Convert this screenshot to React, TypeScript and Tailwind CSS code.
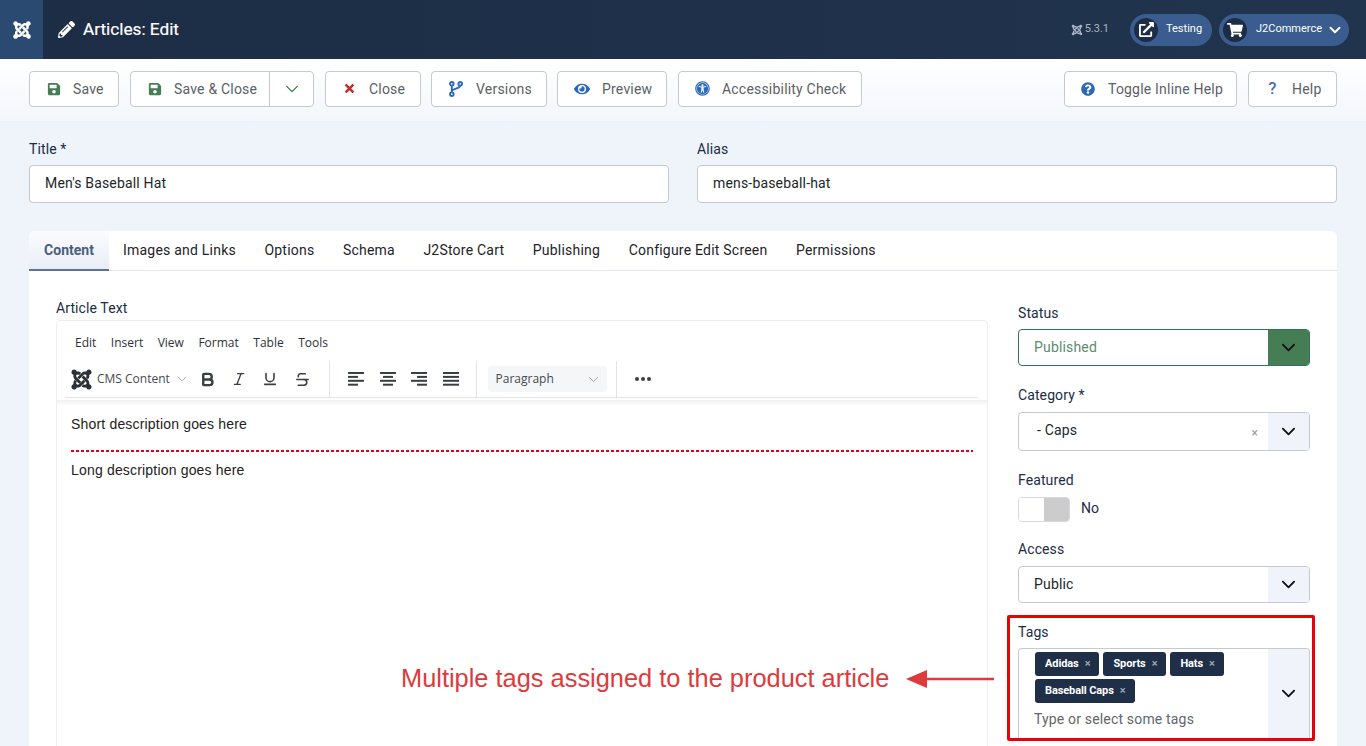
import React from 'react';
import {
  FaJoomla,
  FaPencilAlt,
  FaSave,
  FaTimes,
  FaEye,
  FaUniversalAccess,
  FaQuestionCircle,
  FaExternalLinkAlt,
  FaShoppingCart,
} from 'react-icons/fa';
import { Bold, Italic, Underline, Strikethrough } from 'lucide-react';

const Chevron = ({ className = '', size = 16, stroke = 2 }: { className?: string; size?: number; stroke?: number }) => (
  <svg width={size} height={size} viewBox="0 0 16 16" fill="none" className={className}>
    <path d="M2 5l6 6 6-6" stroke="currentColor" strokeWidth={stroke} strokeLinecap="round" strokeLinejoin="round" />
  </svg>
);

const BranchIcon = ({ className = '' }: { className?: string }) => (
  <svg width="14" height="16" viewBox="0 0 14 16" fill="none" stroke="currentColor" strokeWidth="1.9" className={className}>
    <circle cx="2.8" cy="2.8" r="1.8" />
    <circle cx="11.2" cy="2.8" r="1.8" />
    <circle cx="2.8" cy="13.2" r="1.8" />
    <path d="M2.8 4.6v6.8M11.2 4.6c0 3.6-8.4 2.4-8.4 6" />
  </svg>
);

const ToolBtn = ({ icon, label, w, pad, gap }: { icon: React.ReactNode; label: string; w: string; pad: string; gap: string }) => (
  <button className={`${w} ${pad} ${gap} h-[36px] flex items-center bg-white border border-[#c4c9d2] rounded-[4px] text-[14px] text-[#5a5f66] tracking-[0.2px]`}>
    {icon}
    <span className="pt-[1px]">{label}</span>
  </button>
);

const Label = ({ children, className = '' }: { children: React.ReactNode; className?: string }) => (
  <div className={`text-[14px] leading-[16px] tracking-[0.1px] text-[#1c2c45] ${className}`}>{children}</div>
);

const TextField = ({ label, value }: { label: string; value: string }) => (
  <div className="flex-1">
    <Label className="mb-[8px]">{label}</Label>
    <div className="h-[38px] bg-white border border-[#c4c9d2] rounded-[4px] pl-[15px] pb-[1px] flex items-center text-[14px] tracking-[0.17px] text-[#22262a]">{value}</div>
  </div>
);

const SelectArrow = ({ className = '' }: { className?: string }) => (
  <div className={`w-[41px] flex items-center justify-center text-[#111] bg-[#f0f3fa] ${className}`}>
    <Chevron size={15} />
  </div>
);

const Tag = ({ label }: { label: string }) => (
  <span className="h-[24px] pl-[10px] pr-[9px] bg-[#1f2f48] rounded-[3px] flex items-center gap-[6px] text-[11px] tracking-[-0.1px] font-bold text-white">
    {label}
    <span className="text-[#9aa3b2] text-[11px]">×</span>
  </span>
);

const Divider = ({ className = '' }: { className?: string }) => <div className={`w-px h-[37px] bg-[#e2e3e5] ${className}`} />;

const AlignIcon = ({ lines }: { lines: number[][] }) => (
  <svg width="16" height="14" viewBox="0 0 16 14" fill="#3a3f45">
    {lines.map((l, i) => (
      <rect key={i} x={l[0]} y={i * 3.9} width={l[1]} height="2" />
    ))}
  </svg>
);

const tabs = ['Images and Links', 'Options', 'Schema', 'J2Store Cart', 'Publishing', 'Configure Edit Screen', 'Permissions'];
const menus = ['Edit', 'Insert', 'View', 'Format', 'Table', 'Tools'];

export default function App() {
  return (
    <div className="relative h-[746px] overflow-hidden bg-[#eff3fa] font-['Roboto',sans-serif]">
      {/* header */}
      <header className="h-[59px] flex items-center bg-gradient-to-r from-[#1c2d45] to-[#21344e] text-white">
        <div className="w-[43px] h-full bg-[#2a4a72] flex items-center justify-center">
          <FaJoomla size={20} />
        </div>
        <FaPencilAlt size={17} className="ml-[15px]" />
        <h1 className="ml-[8px] text-[17.2px] font-normal [-webkit-text-stroke:0.2px_white]">Articles: Edit</h1>
        <div className="ml-auto flex items-center pr-[17px]">
          <FaJoomla size={12} className="text-[#a9b4c4]" />
          <span className="ml-[2px] text-[11px] text-[#a9b4c4] mr-[21px]">5.3.1</span>
          <div className="h-[32px] w-[82px] rounded-full bg-[#3a5c8e] flex items-center mr-[7px]">
            <span className="ml-[4px] w-[24px] h-[24px] rounded-full bg-[#1c2d45] flex items-center justify-center">
              <FaExternalLinkAlt size={15} />
            </span>
            <span className="ml-[8px] text-[11px]">Testing</span>
          </div>
          <div className="h-[32px] w-[130px] rounded-full bg-[#3a5c8e] flex items-center">
            <span className="ml-[4px] w-[24px] h-[24px] rounded-full bg-[#1c2d45] flex items-center justify-center">
              <FaShoppingCart size={16} />
            </span>
            <span className="ml-[9px] text-[11px]">J2Commerce</span>
            <Chevron size={12} stroke={2.6} className="ml-[7px]" />
          </div>
        </div>
      </header>

      {/* toolbar */}
      <div className="h-[63px] px-[29px] flex items-center bg-gradient-to-b from-white to-[#f3f6fb] border-b border-[#eef1f7]">
        <div className="flex items-center gap-[11px] -mt-[3px]">
          <ToolBtn w="w-[90px]" pad="pl-[17px]" gap="gap-[12px]" icon={<FaSave size={14} className="text-[#457d54]" />} label="Save" />
          <div className="w-[184px] h-[36px] flex items-center bg-white border border-[#c4c9d2] rounded-[4px] text-[14px] text-[#5a5f66] tracking-[0.2px]">
            <div className="flex-1 flex items-center pl-[17px] gap-[12px]">
              <FaSave size={14} className="text-[#457d54]" />
              <span className="pt-[1px]">Save &amp; Close</span>
            </div>
            <div className="w-[44px] h-full border-l border-[#c4c9d2] flex items-center justify-center text-[#457d54]">
              <Chevron size={14} stroke={1.6} />
            </div>
          </div>
          <ToolBtn w="w-[96px]" pad="pl-[17px]" gap="gap-[13px]" icon={<FaTimes size={13} className="text-[#c52827]" />} label="Close" />
          <div className="-ml-px">
            <ToolBtn w="w-[116px]" pad="pl-[17px]" gap="gap-[13px]" icon={<BranchIcon className="text-[#2a69b8]" />} label="Versions" />
          </div>
          <div className="-ml-px">
            <ToolBtn w="w-[110px]" pad="pl-[16px]" gap="gap-[12px]" icon={<FaEye size={16} className="text-[#2a69b8]" />} label="Preview" />
          </div>
          <ToolBtn w="w-[184px]" pad="pl-[16px]" gap="gap-[12px]" icon={<FaUniversalAccess size={15} className="text-[#2a69b8]" />} label="Accessibility Check" />
        </div>
        <div className="ml-auto flex items-center gap-[11px] -mt-[3px]">
          <ToolBtn w="w-[173px]" pad="pl-[16px]" gap="gap-[13px]" icon={<FaQuestionCircle size={14} className="text-[#2a69b8]" />} label="Toggle Inline Help" />
          <ToolBtn
            w="w-[89px]"
            pad="pl-[19px]"
            gap="gap-[15px]"
            icon={<span className="w-[9px] text-[17px] leading-none font-medium text-[#4a6db0]">?</span>}
            label="Help"
          />
        </div>
      </div>

      {/* main */}
      <main className="px-[29px] pt-[19px]">
        <div className="flex gap-[28px]">
          <TextField label="Title *" value="Men's Baseball Hat" />
          <TextField label="Alias" value="mens-baseball-hat" />
        </div>

        <div className="mt-[28px] bg-white rounded-t-[6px] h-[600px]">
          <div className="h-[40px] flex border-b border-[#dfe3ea] text-[14px] text-[#1e2329]">
            <div className="w-[80px] h-[40px] flex items-center justify-center font-bold text-[#495d7c] bg-gradient-to-b from-[#fbfcfe] to-[#e9eef6] border-b-[2px] border-[#5d7396] rounded-tl-[6px]">
              Content
            </div>
            <div className="flex items-center pl-[14px] gap-[28.5px] h-[39px] tracking-[0.22px]">
              {tabs.map((t) => (
                <span key={t}>{t}</span>
              ))}
            </div>
          </div>

          <div className="flex pl-[27px] pr-[27px] pt-[29px]">
            {/* editor column */}
            <div className="w-[932px]">
              <Label className="mb-[4px]">Article Text</Label>
              <div className="h-[500px] border border-[#eeeeee] rounded-t-[4px]">
                <div className="h-[78px] font-['Open_Sans',sans-serif]">
                  <div className="h-[39px] pl-[18px] pt-[12px] flex gap-[14.5px] text-[12px] leading-[20px] text-[#2d3238]">
                    {menus.map((m) => (
                      <span key={m}>{m}</span>
                    ))}
                  </div>
                  <div className="h-[38px] ml-[8px] mr-[9px] pt-[1px] flex items-center border-b border-[#e2e3e5] text-[#3a3f45]">
                    <FaJoomla size={23} className="ml-[5px] text-[#2b3036]" />
                    <span className="ml-[4px] w-[74px] text-[12px] text-[#454a50] whitespace-nowrap">CMS Content</span>
                    <Chevron size={10} stroke={1.4} className="ml-[6px] text-[#9aa0a6]" />
                    <div className="ml-[5px] flex items-center">
                      <span className="w-[31px] flex justify-center"><Bold size={17} strokeWidth={3.4} /></span>
                      <span className="w-[31px] flex justify-center"><Italic size={16} strokeWidth={2} /></span>
                      <span className="w-[31px] flex justify-center"><Underline size={16} strokeWidth={2.4} /></span>
                      <span className="w-[31px] ml-[2px] flex justify-center"><Strikethrough size={17} strokeWidth={2.2} /></span>
                    </div>
                    <Divider className="ml-[11px]" />
                    <div className="ml-[18px] flex items-center gap-[15.5px]">
                      <AlignIcon lines={[[0, 16], [0, 10], [0, 16], [0, 10]]} />
                      <AlignIcon lines={[[0, 16], [3, 10], [0, 16], [3, 10]]} />
                      <AlignIcon lines={[[0, 16], [6, 10], [0, 16], [6, 10]]} />
                      <AlignIcon lines={[[0, 16], [0, 16], [0, 16], [0, 16]]} />
                    </div>
                    <Divider className="ml-[17px]" />
                    <div className="ml-[11px] w-[119px] h-[26px] bg-[#f5f6f7] rounded-[3px] flex items-center pl-[8px] pr-[8px] justify-between text-[12px] text-[#454a50]">
                      Paragraph
                      <Chevron size={11} stroke={1.4} className="text-[#9aa0a6]" />
                    </div>
                    <Divider className="ml-[9px]" />
                    <div className="ml-[18px] flex gap-[2px]">
                      <span className="w-[4px] h-[4px] rounded-full bg-[#3a3f45]" />
                      <span className="w-[4px] h-[4px] rounded-full bg-[#3a3f45]" />
                      <span className="w-[4px] h-[4px] rounded-full bg-[#3a3f45]" />
                    </div>
                  </div>
                </div>
                <div className="h-[6px] mt-[1px] bg-gradient-to-b from-[#f0f0f0] to-white" />
                <div className="px-[14px] pt-[8px] font-['Liberation_Sans',sans-serif] text-[14px] tracking-[0.18px] leading-[20px] text-[#222]">
                  <p>Short description goes here</p>
                  <div className="mt-[16px] mb-[8px] h-[2px] bg-[repeating-linear-gradient(90deg,#e0001b_0_3px,transparent_3px_5px)]" />
                  <p>Long description goes here</p>
                </div>
              </div>
            </div>

            {/* side column */}
            <div className="ml-[30px] w-[292px] pt-[5px]">
              <Label className="mb-[8px]">Status</Label>
              <div className="h-[37px] flex bg-white border border-[#37705a] rounded-[4px] overflow-hidden">
                <div className="flex-1 pl-[15px] flex items-center text-[14px] tracking-[0.17px] text-[#5f8a6c]">Published</div>
                <SelectArrow className="!bg-[#457d54]" />
              </div>

              <Label className="mt-[21px] mb-[9px]">Category *</Label>
              <div className="h-[39px] flex bg-white border border-[#c4c9d2] rounded-[4px] overflow-hidden">
                <div className="flex-1 pl-[18px] pb-[3px] flex items-center text-[14px] tracking-[0.17px] text-[#22262a]">- Caps</div>
                <span className="self-center mt-[3px] mr-[10px] text-[12px] text-[#999]">×</span>
                <SelectArrow />
              </div>

              <Label className="mt-[21px] mb-[9px]">Featured</Label>
              <div className="flex items-center">
                <div className="w-[52px] h-[25px] flex rounded-[4px] overflow-hidden border border-[#d5d8de]">
                  <div className="flex-1 bg-white" />
                  <div className="w-[25px] bg-[#cccccc]" />
                </div>
                <span className="ml-[11px] pb-[2px] text-[14px] text-[#1c2c45]">No</span>
              </div>

              <Label className="mt-[19px] mb-[9px]">Access</Label>
              <div className="h-[37px] flex bg-white border border-[#c4c9d2] rounded-[4px] overflow-hidden">
                <div className="flex-1 pl-[15px] flex items-center text-[14px] tracking-[0.17px] text-[#22262a]">Public</div>
                <SelectArrow />
              </div>

              <Label className="mt-[21px] mb-[8px]">Tags</Label>
              <div className="h-[91px] flex bg-white border border-b-0 border-[#c4c9d2] rounded-t-[4px] overflow-hidden">
                <div className="flex-1 pl-[16px] pt-[3px]">
                  <div className="flex flex-wrap gap-x-[4px] gap-y-[3px]">
                    <Tag label="Adidas" />
                    <Tag label="Sports" />
                    <Tag label="Hats" />
                    <Tag label="Baseball Caps" />
                  </div>
                  <div className="mt-[6px] -ml-px text-[14px] tracking-[0.17px] leading-[20px] text-[#62666b]">Type or select some tags</div>
                </div>
                <SelectArrow className="pb-[2px]" />
              </div>
            </div>
          </div>
        </div>
      </main>

      {/* annotation drawn over the page */}
      <div className="absolute left-[1007px] top-[615px] w-[308px] h-[126px] border-[3px] border-[#e8000b] rounded-[2px]" />
      <div className="absolute left-[401px] top-[663px] font-['Liberation_Sans',sans-serif] text-[25.4px] leading-[30px] text-[#de3a3c] whitespace-nowrap">
        Multiple tags assigned to the product article
      </div>
      <svg className="absolute left-[905px] top-[668px]" width="90" height="22" viewBox="0 0 90 22">
        <path d="M1 11 L22 2 L22 9.8 L89 9.8 L89 12.2 L22 12.2 L22 20 Z" fill="#de3a3c" />
      </svg>
    </div>
  );
}
